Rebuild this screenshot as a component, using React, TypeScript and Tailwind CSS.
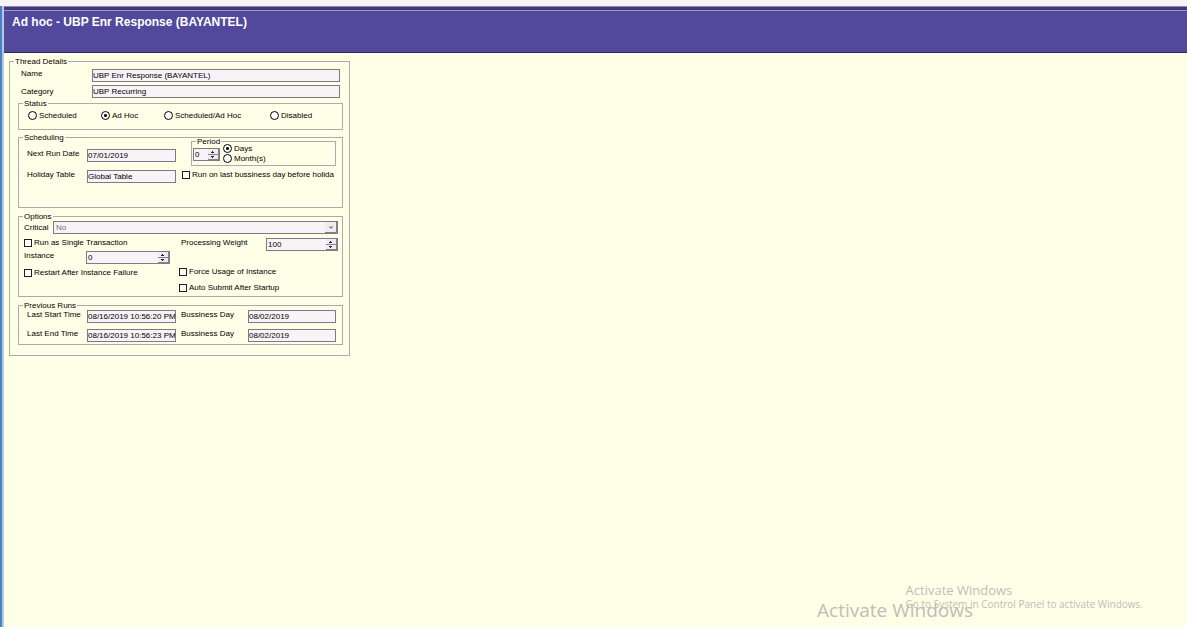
import type { ReactNode } from "react";

const box = "h-[13px] rounded-none border border-[#7b7b84] bg-[#f7f3f7] text-[8px] leading-[9px] outline-none";

function Group({ title, className, children }: { title: string; className?: string; children: ReactNode }) {
  return (
    <fieldset className={`min-w-0 border border-[#adaaad] ${className ?? ""}`}>
      <legend className="ml-1 px-px leading-[9px]">{title}</legend>
      {children}
    </fieldset>
  );
}

function Radio({ name, label, checked, className }: { name: string; label: string; checked?: boolean; className?: string }) {
  return (
    <label className={`flex items-center gap-0.5 whitespace-nowrap ${className ?? ""}`}>
      <input
        type="radio"
        name={name}
        defaultChecked={checked}
        className="size-[9px] shrink-0 appearance-none rounded-full border border-black bg-white bg-[radial-gradient(circle,black_0_1px,transparent_2px)] not-checked:bg-none"
      />
      {label}
    </label>
  );
}

function Check({ label, className }: { label: string; className?: string }) {
  return (
    <label className={`flex items-center gap-0.5 whitespace-nowrap ${className ?? ""}`}>
      <input type="checkbox" className="size-2 shrink-0 appearance-none border border-[#212021] bg-[#fffff7] checked:bg-black" />
      {label}
    </label>
  );
}

function Spinner({ id, label, value, className }: { id: string; label: string; value: string; className: string }) {
  return (
    <div className={`flex h-[13px] border border-[#7b7b84] bg-[#f7f3f7] ${className}`}>
      <input id={id} aria-label={label} defaultValue={value} className="min-w-0 flex-1 pl-px text-[8px] leading-[11px] outline-none" />
      <div className="flex w-[11px] shrink-0 flex-col">
        {["M3 3h3v1H3zM4 2h1v1H4z", "M3 1h3v1H3zM4 2h1v1H4z"].map((d, i) => (
          <button
            key={d}
            type="button"
            aria-label={i === 0 ? "Increase" : "Decrease"}
            className="flex flex-1 items-center justify-center border-r border-b border-[#84828c] bg-[#efebef]"
          >
            <svg width="10" height="4" viewBox="0 0 10 4" fill="#212021" shapeRendering="crispEdges">
              <path d={d} />
            </svg>
          </button>
        ))}
      </div>
    </div>
  );
}

function Field({ id, label, value, labelClass, className }: { id: string; label: string; value: string; labelClass: string; className: string }) {
  return (
    <>
      <label htmlFor={id} className={`shrink-0 whitespace-nowrap ${labelClass}`}>{label}</label>
      <input id={id} readOnly value={value} className={`${box} ${className}`} />
    </>
  );
}

export default function App() {
  return (
    <div className="flex min-h-screen flex-col bg-[#ffffe7] font-['Liberation_Sans',Arial,sans-serif] text-[8px] leading-[9px] text-black">
      <div className="h-1.5 bg-[#f7f3f7]" />
      <div className="flex flex-1">
        <div className="w-[3px] shrink-0 border-r border-[#a5c7ef] bg-[#4a82c6]" />
        <div className="relative flex min-w-0 flex-1 flex-col border-l border-[#c6cbce]">
          <div className="h-1 border-t border-[#8c86bd] bg-[#42387b]" />
          <header className="h-[43px] border-t border-b border-t-[#9c96bd] border-b-[#312863] bg-[#52499c] px-2 pt-1">
            <h1 className="text-[12px] leading-[14px] font-bold text-white">Ad hoc - UBP Enr Response (BAYANTEL)</h1>
          </header>

          <main className="pt-1 pl-[5px]">
            <Group title="Thread Details" className="w-[341px]">
              <div className="flex flex-col pr-1.5 pb-2.5 pl-2">
                <div className="flex flex-col gap-[3px] pt-[3px] pr-[3px] pl-[3px]">
                  <div className="flex">
                    <Field id="name" label="Name" value="UBP Enr Response (BAYANTEL)" labelClass="w-[71px]" className="min-w-0 flex-1" />
                  </div>
                  <div className="flex items-center">
                    <Field id="category" label="Category" value="UBP Recurring" labelClass="w-[71px]" className="min-w-0 flex-1" />
                  </div>
                </div>

                <Group title="Status" className="mt-px">
                  <div className="flex pt-[3px] pb-[9px] pl-[9px]">
                    <Radio name="status" label="Scheduled" className="w-[73px]" />
                    <Radio name="status" label="Ad Hoc" checked className="w-[63px]" />
                    <Radio name="status" label="Scheduled/Ad Hoc" className="w-[106px]" />
                    <Radio name="status" label="Disabled" />
                  </div>
                </Group>

                <Group title="Scheduling" className="mt-[3px]">
                  <div className="flex pr-1.5 pb-6 pl-2">
                    <div className="flex w-[155px] shrink-0 flex-col gap-2 pt-[7px]">
                      <div className="flex">
                        <Field id="next-run" label="Next Run Date" value="07/01/2019" labelClass="w-[60px]" className="w-[89px]" />
                      </div>
                      <div className="flex">
                        <Field id="holiday" label="Holiday Table" value="Global Table" labelClass="w-[60px]" className="w-[89px]" />
                      </div>
                    </div>
                    <div className="flex min-w-0 flex-1 flex-col gap-1">
                      <Group title="Period" className="-mt-[5px] ml-[9px]">
                        <div className="flex gap-[3px] pb-0.5 pl-px">
                          <Spinner id="period" label="Period" value="0" className="mt-0.5 w-[27px]" />
                          <div className="-mt-0.5 flex flex-col gap-px">
                            <Radio name="period-unit" label="Days" checked />
                            <Radio name="period-unit" label="Month(s)" />
                          </div>
                        </div>
                      </Group>
                      <Check label="Run on last bussiness day before holida" />
                    </div>
                  </div>
                </Group>

                <Group title="Options" className="mt-1">
                  <div className="flex flex-col pr-1 pb-1 pl-[5px]">
                    <div className="flex items-center">
                      <label htmlFor="critical" className="w-[29px] shrink-0">Critical</label>
                      <div className="relative min-w-0 flex-1">
                        <select id="critical" disabled className={`${box} block w-full appearance-none pl-0.5 text-[#73717b] opacity-100`}>
                          <option>No</option>
                        </select>
                        <svg className="pointer-events-none absolute top-px right-px" width="12" height="11" viewBox="0 0 12 11">
                          <path d="M0 0h12v11H0z" fill="#efebef" />
                          <path d="M11.500 0v10.500H0" fill="none" stroke="#848284" />
                          <path d="M3.500 4.500h5L6 7z" fill="#848284" />
                        </svg>
                      </div>
                    </div>
                    <div className="flex justify-between">
                      <div className="flex w-[155px] flex-col pt-1">
                        <Check label="Run as Single Transaction" />
                        <div className="mt-1 flex">
                          <label htmlFor="instance" className="w-[62px]">Instance</label>
                          <Spinner id="instance" label="Instance" value="0" className="w-[84px]" />
                        </div>
                        <Check label="Restart After Instance Failure" className="mt-1" />
                      </div>
                      <div className="flex w-[159px] flex-col pt-1">
                        <div className="flex justify-between">
                          <label htmlFor="weight" className="pl-0.5">Processing Weight</label>
                          <Spinner id="weight" label="Processing Weight" value="100" className="w-[72px]" />
                        </div>
                        <Check label="Force Usage of Instance" className="mt-4" />
                        <Check label="Auto Submit After Startup" className="mt-[7px]" />
                      </div>
                    </div>
                  </div>
                </Group>

                <Group title="Previous Runs" className="mt-1">
                  <div className="flex flex-col gap-1.5 pr-1.5 pb-0.5 pl-2">
                    <div className="flex">
                      <Field id="start" label="Last Start Time" value="08/16/2019 10:56:20 PM" labelClass="w-[60px]" className="w-[89px]" />
                      <Field id="start-day" label="Bussiness Day" value="08/02/2019" labelClass="ml-[5px] w-[67px]" className="min-w-0 flex-1" />
                    </div>
                    <div className="flex">
                      <Field id="end" label="Last End Time" value="08/16/2019 10:56:23 PM" labelClass="w-[60px]" className="w-[89px]" />
                      <Field id="end-day" label="Bussiness Day" value="08/02/2019" labelClass="ml-[5px] w-[67px]" className="min-w-0 flex-1" />
                    </div>
                  </div>
                </Group>
              </div>
            </Group>
          </main>

          <div className="pointer-events-none absolute right-11 bottom-[17px] font-['Open_Sans',sans-serif] whitespace-nowrap text-[#bdbeb5]">
            <p className="text-[13px] leading-4">Activate Windows</p>
            <p className="text-[10px] leading-3">Go to System in Control Panel to activate Windows.</p>
          </div>
          <p className="pointer-events-none absolute right-[214px] bottom-[5px] font-['Open_Sans',sans-serif] text-[19px] leading-6 whitespace-nowrap text-[#bdbeb5]">
            Activate Windows
          </p>
        </div>
      </div>
    </div>
  );
}
